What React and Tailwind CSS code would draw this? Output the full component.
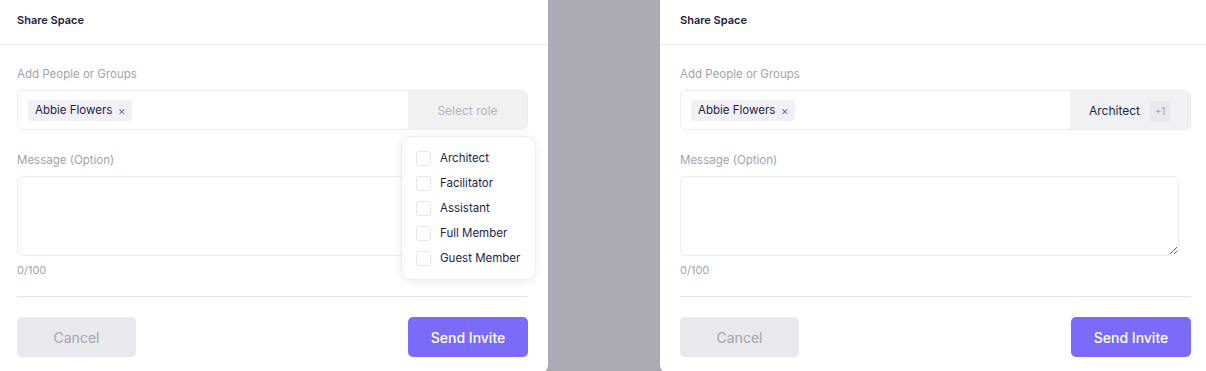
import { useState } from "react";

const roles = ["Architect", "Facilitator", "Assistant", "Full Member", "Guest Member"];

function Tag() {
  return (
    <span className="inline-flex h-[21px] items-center gap-[6px] rounded-[3px] bg-[#f1f0f6] pl-[7px] pr-[6px] pt-[2px] text-[11.5px] text-[#231f47]">
      Abbie Flowers
      <span className="text-[9px] leading-none text-[#6e6b86]">✕</span>
    </span>
  );
}

function Panel({ className, pad, selected, showMenu }) {
  const [count] = useState(0);
  return (
    <div className={`relative h-[373px] bg-white ${className}`}>
      {/* Header */}
      <div className={`flex h-[45px] items-center border-b border-[#ebebef] pb-[4px] ${pad}`}>
        <h2 className="text-[11px] font-semibold text-[#1e1b3d]">Share Space</h2>
      </div>

      <div className={`pr-5 pt-[21px] ${pad}`}>
        <label className="block text-[11.5px] leading-4 text-[#a3a2b0]">Add People or Groups</label>

        {/* People input + role select */}
        <div className="mt-[8px] flex h-10 rounded-md border border-[#ececf0]">
          <div className="flex flex-1 items-center pl-[10px]">
            <Tag />
          </div>
          {selected ? (
            <div className="flex w-[120px] items-center justify-end gap-[10px] rounded-r-md bg-[#f1f1f4] pr-[20px] pt-[2px] text-[12px] text-[#231f47]">
              Architect
              <span className="flex h-[21px] w-[20px] items-center justify-center rounded-[3px] bg-[#e8e8ed] text-[10px] text-[#a4a3b0]">
                +1
              </span>
            </div>
          ) : (
            <div className="flex w-[119px] items-center justify-center rounded-r-md bg-[#f1f1f4] pt-[2px] text-[12px] text-[#b4b3be]">
              Select role
            </div>
          )}
        </div>

        <label className="mt-[22px] block text-[11.5px] leading-4 text-[#a3a2b0]">Message (Option)</label>
        <textarea className="mt-[8px] block h-20 w-[calc(100%-12px)] rounded-md border border-[#ececf0] outline-none" />
        <p className="mt-[6px] text-[11px] leading-4 text-[#a3a2b0]">0/{100 + count}</p>

        <div className="mt-[18px] border-t border-[#e6e6ea]" />

        <div className="mt-5 flex justify-between">
          <button className="h-10 w-[119px] rounded-[5px] bg-[#e9e9ed] text-[14px] text-[#a6a5b0]">Cancel</button>
          <button className="h-10 w-[120px] rounded-[5px] bg-[#7b6bfa] text-[14px] font-medium text-white">
            Send Invite
          </button>
        </div>
      </div>

      {showMenu && (
        <div className="absolute left-[401px] top-[136px] w-[135px] rounded-[10px] border border-[#f0f0f3] bg-white pb-[8px] pt-[9px] shadow-[0_2px_10px_rgba(30,27,61,0.08)]">
          {roles.map((r) => (
            <div key={r} className="flex h-[25px] items-center pl-[14px]">
              <span className="h-[15px] w-[15px] rounded-[3px] border border-[#e6e6ea]" />
              <span className="ml-[9px] text-[11.5px] text-[#231f47]">{r}</span>
            </div>
          ))}
        </div>
      )}
    </div>
  );
}

export default function App() {
  return (
    <div className="flex h-[371px] w-[1206px] overflow-hidden bg-[#acabb3] font-['Inter',sans-serif]">
      <Panel className="w-[548px] shrink-0 rounded-br-lg" pad="pl-[17px]" showMenu />
      <div className="w-[112px] shrink-0" />
      <Panel className="w-[551px] shrink-0 rounded-bl-lg" pad="pl-5" selected />
    </div>
  );
}
